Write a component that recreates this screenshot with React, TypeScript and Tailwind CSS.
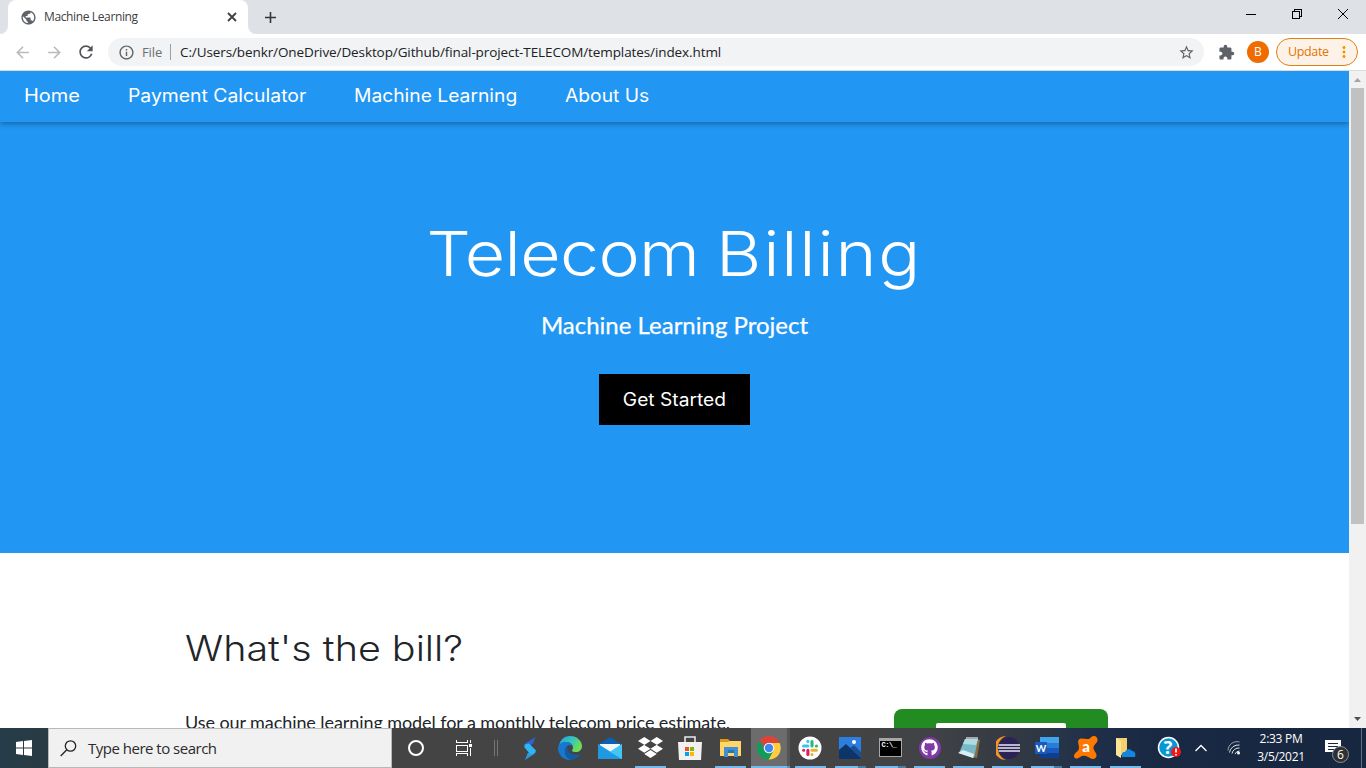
import React from "react";
import {
  MdPublic, MdAdd, MdArrowBack, MdArrowForward, MdRefresh,
  MdInfoOutline, MdStarBorder, MdExtension, MdMoreVert,
} from "react-icons/md";
import { FaGithub, FaDropbox } from "react-icons/fa";

function TabStrip() {
  return (
    <div className="flex h-[34px] shrink-0 bg-[#dee1e6]">
      <div className="w-2 bg-white">
        <div className="h-full rounded-br-lg bg-[#dee1e6]" />
      </div>
      <div className="flex w-[240px] items-center rounded-t-lg bg-white pl-[12px] pr-[9px]">
        <MdPublic size={17} className="shrink-0 text-[#5f6368]" />
        <span className="ml-[7px] grow whitespace-nowrap text-[12px] tracking-[-0.37px] text-[#3c4043]">Machine Learning</span>
        <svg width="14" height="14" viewBox="0 0 14 14" className="shrink-0" stroke="#3c4043" strokeWidth="1.800"><path d="M3 3l8 8M11 3l-8 8" /></svg>
      </div>
      <div className="w-2 bg-white">
        <div className="h-full rounded-bl-lg bg-[#dee1e6]" />
      </div>
      <div className="flex w-7 items-center justify-center">
        <MdAdd size={19} className="text-[#33363a]" />
      </div>
      <div className="grow" />
      <svg width="138" height="28" viewBox="0 0 138 28" fill="none" stroke="#000" shapeRendering="crispEdges">
        <path d="M18 14.500h10" />
        <path d="M64.500 11.500h7v7h-7zM66.500 11v-1.500h7v7H72" />
        <path d="M110 9l10 10M120 9l-10 10" shapeRendering="auto" />
      </svg>
    </div>
  );
}

function Toolbar() {
  return (
    <div className="flex h-[37px] shrink-0 items-center border-b border-[#dadce0] bg-white pl-[13px] pr-2 text-[13px]">
      <MdArrowBack size={19} className="shrink-0 text-[#b8babd]" />
      <MdArrowForward size={19} className="ml-[13px] shrink-0 text-[#b8babd]" />
      <MdRefresh size={20} className="ml-3 shrink-0 text-[#515559]" />
      <div className="ml-3 flex h-7 w-[1096px] shrink-0 items-center rounded-full bg-[#f1f3f4] pl-[10px] pr-[9px]">
        <MdInfoOutline size={17} className="text-[#5f6368]" />
        <span className="ml-[7px] w-[21px] whitespace-nowrap pt-px tracking-[-0.1px] text-[#6b6f74]">File</span>
        <span className="ml-[7px] h-4 w-px bg-[#9aa0a6]" />
        <span className="ml-[9px] grow whitespace-nowrap pt-px text-[13.5px] tracking-[-0.1px] text-[#202124]">
          C:/Users/benkr/OneDrive/Desktop/Github/final-project-TELECOM/templates/index.html
        </span>
        <MdStarBorder size={17} className="text-[#5f6368]" />
      </div>
      <MdExtension size={17} className="ml-[14px] shrink-0 text-[#5f6368]" />
      <div className="ml-3 flex size-[22px] shrink-0 items-center justify-center rounded-full bg-[#ef6c00] text-[12px] text-white">B</div>
      <div className="ml-[7px] flex h-7 w-[82px] shrink-0 items-center rounded-full border border-[#e37f0c] bg-[#fcf2e8] pl-[11px] text-[12.5px] text-[#e37400]">
        <span className="w-[39px] whitespace-nowrap tracking-[-0.35px]">Update</span>
        <MdMoreVert size={18} className="ml-[8px] text-[#f29900]" />
      </div>
    </div>
  );
}

function Page() {
  return (
    <div className="flex min-h-0 grow bg-white">
      <div className="flex w-[1349px] flex-col overflow-hidden">
        <nav className="z-10 flex h-[51px] shrink-0 gap-12 whitespace-nowrap bg-[#2196f3] pl-6 font-['Inter'] text-[18px] leading-[50px] text-white shadow-[0_2px_5px_rgba(0,0,0,0.3)]">
          <a className="w-14 origin-left scale-x-[1.11]">Home</a>
          <a className="w-[178px] origin-left scale-x-[1.076]">Payment Calculator</a>
          <a className="w-[163px] origin-left scale-x-[1.07]">Machine Learning</a>
          <a className="w-[84px] origin-left scale-x-[1.07]">About Us</a>
        </nav>
        <header className="flex h-[431px] shrink-0 flex-col items-center bg-[#2196f3] pt-[85px] text-white">
          <h1 className="scale-x-[1.125] whitespace-nowrap font-['Inter'] text-[62px] font-light leading-[94px]">
            <span className="tracking-[-0.55px]">Telecom </span>
            <span className="-ml-[2px] tracking-[1.6px]">Billing</span>
          </h1>
          <p className="mt-[6px] whitespace-nowrap font-['Lato'] text-[24px] leading-9 [-webkit-text-stroke:0.25px_white]">Machine Learning Project</p>
          <button className="mt-[31px] h-[51px] w-[151px] whitespace-nowrap bg-black pb-px font-['Inter'] text-[18px]">
            <span className="inline-block scale-x-[1.065]">Get Started</span>
          </button>
        </header>
        <main className="flex min-h-0 grow justify-between overflow-hidden pl-[185px] pr-[241px] text-[#212529]">
          <section>
            <h2 className="mt-[68px] w-[248px] origin-left scale-x-[1.128] whitespace-nowrap font-['Inter'] text-[35px] font-light leading-[54px]">What's the bill?</h2>
            <p className="mt-[34px] whitespace-nowrap font-['Lato'] text-[18px] leading-[27px] tracking-[-0.08px]">
              Use our machine learning model for a monthly telecom price estimate.
            </p>
          </section>
          <div className="mt-[156px] h-[260px] w-[214px] rounded-lg bg-[#228b22] px-[42px] pt-[14px]">
            <div className="h-20 rounded-[2px] bg-white" />
          </div>
        </main>
      </div>
      <div className="flex w-[17px] flex-col items-center bg-[#f1f1f1]">
        <svg width="17" height="17" viewBox="0 0 17 17"><path d="M5 11l3.500-4 3.500 4z" fill="#a3a3a3" /></svg>
        <div className="h-[436px] w-[13px] bg-[#c1c1c1]" />
        <div className="grow" />
        <svg width="17" height="17" viewBox="0 0 17 17"><path d="M5 6l3.500 4L12 6z" fill="#505050" /></svg>
      </div>
    </div>
  );
}

const barStyles = {
  none: "hidden",
  single: "w-[31px]",
  split: "w-[31px]",
  active: "w-[39px]",
};

function AppSlot({ bar = "none", narrow = false, children }: { bar?: keyof typeof barStyles; narrow?: boolean; children: React.ReactNode }) {
  const active = bar === "active";
  return (
    <div className={`${narrow ? "w-[39px]" : "w-10"} flex h-10 shrink-0 flex-col items-center`}>
      <div className={`flex h-[38px] items-center justify-center pt-px ${active ? "w-[39px] border-r-[3px] border-[#555] bg-[#6c6c6c]" : "w-full"}`}>{children}</div>
      <div className={`${barStyles[bar]} flex h-[2px] bg-[#76b9ed]`}>
        {bar === "split" && <div className="ml-[23px] w-2 bg-[#4e7ba1]" />}
        {active && <div className="ml-9 w-[3px] bg-[#5b94c1]" />}
      </div>
    </div>
  );
}

const StormIcon = () => (
  <svg width="24" height="24" viewBox="0 0 24 24">
    <path d="M17.500 1l-2.500 6.500-4 2.500-4-2c1-2 3-2.500 5-3.500z" fill="#2f62d8" />
    <path d="M7 24l2.500-6.500 4-3 4 1.500c-1 2-2.500 3-4.500 4z" fill="#2a9be0" />
    <path d="M6.500 8.500l4.500-1 7 7-1 2.500-4.500 1.500-6-7z" fill="#2fb5f3" />
  </svg>
);

const EdgeIcon = () => (
  <svg width="24" height="24" viewBox="0 0 24 24">
    <defs>
      <linearGradient id="edgeTop" x1="0" y1="0" x2="1" y2=".5"><stop stopColor="#249edb" /><stop offset=".55" stopColor="#35c5bf" /><stop offset="1" stopColor="#70dd50" /></linearGradient>
    </defs>
    <path d="M1 10C2 4 6 0 12 0c7 0 12 5 12 10 0 4-3 6-6 6-2 0-4-.7-4-1.600 0-.7 1-1 1-3C15 9 12 6 8 6c-3 0-6 2-7 4z" fill="url(#edgeTop)" />
    <path d="M0 12c0-4 4-6 8-6 4 0 7 2 7 5-1-2-3-2-4-2-3 1-4 4-4 7 0 4 3 7 7 8C6 25 0 19 0 12z" fill="#1778cf" />
    <path d="M9.500 10C7 12 6 14 7 17c1 4 4 7 7 7 4-1 7-3 8.500-5.500.3-.5-.1-.8-.6-.6C15 20.500 9 17 9.500 10z" fill="#115ca5" />
  </svg>
);

const MailIcon = () => (
  <svg width="24" height="24" viewBox="0 0 24 24">
    <path d="M0 9L12 1l12 8v3H0z" fill="#0b61b5" />
    <path d="M2 8h20v8H2z" fill="#f4f5f7" />
    <path d="M0 8l12 8 12-8v15H0z" fill="#35b8f1" />
    <path d="M0 8l24 15H0z" fill="#1e9ae4" /><path d="M24 8v15L12 16z" fill="#42c5f7" />
  </svg>
);

const StoreIcon = () => (
  <svg width="24" height="24" viewBox="0 0 24 24">
    <path d="M7 7V1h10v6" fill="none" stroke="#e8e8e8" strokeWidth="1.600" />
    <path d="M0 6h24l-1 18H1z" fill="#f1f1f1" />
    <path d="M7 11h4v4H7z" fill="#f25022" /><path d="M12 11h4v4h-4z" fill="#7fba00" />
    <path d="M7 16h4v4H7z" fill="#00a4ef" /><path d="M12 16h4v4h-4z" fill="#ffb900" />
  </svg>
);

const ExplorerIcon = () => (
  <svg width="23" height="20" viewBox="0 0 23 20">
    <path d="M1 1h8l2 2h11v6H1z" fill="#d99b16" />
    <path d="M1 4h8l2-1h11v15H1z" fill="#ffd667" />
    <path d="M5 9h14v10h-4v-4H9v4H5z" fill="#3e91d3" /><path d="M9 12h6v3H9z" fill="#2877b5" />
  </svg>
);

const ChromeIcon = () => (
  <svg width="24" height="24" viewBox="0 0 24 24">
    <path d="M12 12L2.200 5.300A11.500 11.500 0 0 1 22.600 7H12z" fill="#db4437" />
    <path d="M22.600 7A11.500 11.500 0 0 1 11.500 23.500L16.500 14.500 12 7z" fill="#ffcd40" />
    <path d="M2.200 5.300A11.500 11.500 0 0 0 11.500 23.500L16.300 14.500 12 12 7 13z" fill="#0f9d58" />
    <circle cx="12" cy="12" r="5.300" fill="#f4f4f4" /><circle cx="12" cy="12" r="4.200" fill="#4285f4" />
  </svg>
);

const SlackIcon = () => (
  <svg width="24" height="24" viewBox="0 0 24 24" strokeWidth="3.100" strokeLinecap="round">
    <circle cx="12" cy="12" r="11.500" fill="#fff" />
    <path d="M9.900 5.400v.2M5.600 10h4.300" stroke="#36c5f0" />
    <path d="M14 5.500V10M18.400 10h.1" stroke="#2eb67d" />
    <path d="M18.400 14.200H14M14 18.500v.1" stroke="#ecb22e" />
    <path d="M9.900 14.200v4.200M5.600 14.200h.1" stroke="#e01e5a" />
  </svg>
);

const PhotosIcon = () => (
  <svg width="22" height="22" viewBox="0 0 22 22">
    <path d="M0 0h22v22H0z" fill="#2c7fe0" />
    <path d="M0 13l7-6 15 14v1H0z" fill="#0e3569" /><path d="M11 11l4-3 7 7v6z" fill="#1b4f94" />
    <circle cx="15" cy="5" r="2" fill="#fff" />
  </svg>
);

const TerminalIcon = () => (
  <div className="h-[19px] w-[23px] border border-[#a7a7a7] border-t-[3px] bg-black pl-[2px] pt-px font-['Liberation_Mono'] text-[7px] font-bold leading-[7px] tracking-[-0.5px] text-white">C:\_</div>
);

const NotepadIcon = () => (
  <svg width="24" height="24" viewBox="0 0 24 24">
    <path d="M20 3l3 1-3 18-4-1z" fill="#8b6b43" />
    <path d="M8 3l13 0-4 19-15-5z" fill="#78b9c8" /><path d="M8 3h13l-2 6-13-1z" fill="#b0dbe2" />
    <path d="M1 17l5-3 11 4-1 4z" fill="#d9eef0" /><path d="M9 2h12" stroke="#ccc" strokeWidth="1.500" />
  </svg>
);

const EclipseIcon = () => (
  <svg width="24" height="24" viewBox="0 0 24 24">
    <path d="M10 0A12 12 0 0 0 10 24C-1 19-1 5 10 0z" fill="#f79422" />
    <circle cx="13" cy="12" r="11" fill="#2c2255" />
    <path d="M2.500 9h21.500M2 12h22M2.500 15h21.500" stroke="#e8e6f2" strokeWidth="1.500" />
  </svg>
);

const WordIcon = () => (
  <svg width="24" height="22" viewBox="0 0 24 22">
    <path d="M5 0h19v6H5z" fill="#41a5ee" /><path d="M5 6h19v5H5z" fill="#2b7cd3" />
    <path d="M5 11h19v5H5z" fill="#185abd" /><path d="M5 16h19v5H5z" fill="#103f91" />
    <path d="M0 5h12v12H0z" fill="#185abd" />
    <text x="6" y="14.500" textAnchor="middle" fill="#fff" className="font-['Lato'] text-[10px] font-bold">W</text>
  </svg>
);

const AvastIcon = () => (
  <svg width="24" height="24" viewBox="0 0 24 24">
    <path d="M5 3.500C7 1.500 11 3.500 14.500 3c2.500-.5 2.500-3 5.500-3 3 0 4.500 3.500 3 6-1.200 2-4 3.500-3.500 6.500.5 3 3.500 4.500 3 7.500-.5 3-4 3.800-6.500 2-2.500-1.800-5-3-8-2-2.500 1-3.500 3-6 2.500C0 22-.7 19.500 1 17.500c1.500-1.700 4-2.500 4-6 0-3-2-6 0-8z" fill="#ff7800" />
    <text x="12" y="15.500" textAnchor="middle" fill="#fff" className="font-['Lato'] text-[15px] font-black">a</text>
  </svg>
);

const OneDriveFolderIcon = () => (
  <svg width="22" height="22" viewBox="0 0 22 22">
    <path d="M2 1h11v17H2z" fill="#f5ce70" /><path d="M2 1l5 3v17l-5-3z" fill="#ffe498" />
    <path d="M8 20c-1-3 0-5 3-5 1-3 5-4 7-1 3 0 4 3 3 6z" fill="#1685de" />
  </svg>
);

const HelpIcon = () => (
  <svg width="24" height="24" viewBox="0 0 24 24">
    <circle cx="11.500" cy="11.500" r="10" fill="#0797d7" stroke="#fff" strokeWidth="1.500" />
    <text x="11" y="18" textAnchor="middle" fill="#fff" className="font-['Open_Sans'] text-[18px] font-bold">?</text>
    <circle cx="19" cy="16" r="5" fill="#f11616" />
    <path d="M19 12.500v4M19 18v1.500" stroke="#fff" strokeWidth="1.700" />
  </svg>
);

function Taskbar() {
  return (
    <div className="flex h-10 shrink-0 bg-[linear-gradient(90deg,#444_0,#444_850px,#404246_930px,#343a43_1010px,#20304a_1090px,#1a2943_1150px,#182740_100%)] text-white">
      <div className="flex w-12 items-center justify-center bg-[linear-gradient(90deg,#253d49,#293a43)]">
        <svg width="16" height="16" viewBox="0 0 16 16" fill="#fff"><path d="M0 2l7-1v6.500H0zM8 .9L16 0v7.500H8zM0 8.500h7V15l-7-1zM8 8.500h8V16l-8-1z" /></svg>
      </div>
      <div className="flex w-[344px] items-center border border-[#b9b9b9] bg-[#f1f1f1] pl-[11px]">
        <svg width="17" height="17" viewBox="0 0 17 17" fill="none" stroke="#222" strokeWidth="1.300"><circle cx="10.500" cy="6" r="5.200" /><path d="M6.800 9.800L.7 16" /></svg>
        <span className="ml-[11px] whitespace-nowrap text-[15px] tracking-[-0.5px] text-[#2b2b2b]">Type here to search</span>
      </div>
      <div className="flex w-12 items-center justify-center">
        <svg width="18" height="18" viewBox="0 0 18 18"><circle cx="9" cy="9" r="7" fill="none" stroke="#fff" strokeWidth="2" /></svg>
      </div>
      <div className="flex w-12 items-center justify-center">
        <svg width="17" height="16" viewBox="0 0 17 16" fill="none" stroke="#fff" shapeRendering="crispEdges">
          <path d="M.5 0v2.500h11V0M.5 5.500h11v6H.5zM.5 16v-2.500h11V16M14.500 0v3M14.500 8v8" /><path d="M13 4h3v3h-3z" fill="#fff" stroke="none" />
        </svg>
      </div>
      <div className="flex w-[22px] items-center gap-[2px] pl-[6px]">
        <span className="h-4 w-px bg-[#777]" /><span className="h-4 w-px bg-[#777]" />
      </div>
      <AppSlot><StormIcon /></AppSlot>
      <AppSlot><EdgeIcon /></AppSlot>
      <AppSlot><MailIcon /></AppSlot>
      <AppSlot bar="single"><FaDropbox size={25} /></AppSlot>
      <AppSlot><StoreIcon /></AppSlot>
      <AppSlot bar="single"><ExplorerIcon /></AppSlot>
      <AppSlot bar="active"><ChromeIcon /></AppSlot>
      <AppSlot bar="single"><SlackIcon /></AppSlot>
      <AppSlot bar="split"><PhotosIcon /></AppSlot>
      <AppSlot bar="split"><TerminalIcon /></AppSlot>
      <AppSlot bar="single" narrow>
        <div className="flex size-[22px] items-center justify-center rounded-full bg-[#8139a6]"><FaGithub size={17} /></div>
      </AppSlot>
      <AppSlot bar="single" narrow><NotepadIcon /></AppSlot>
      <AppSlot bar="single" narrow><EclipseIcon /></AppSlot>
      <AppSlot bar="split" narrow><WordIcon /></AppSlot>
      <AppSlot bar="single" narrow><AvastIcon /></AppSlot>
      <AppSlot bar="single"><OneDriveFolderIcon /></AppSlot>
      <div className="flex w-12 items-center justify-center"><HelpIcon /></div>
      <div className="flex w-4 items-center justify-center">
        <svg width="12" height="8" viewBox="0 0 12 8" fill="none" stroke="#fff" strokeWidth="1.300"><path d="M.5 7L6 1.500 11.500 7" /></svg>
      </div>
      <div className="flex w-[49px] items-center justify-center">
        <svg width="14" height="14" viewBox="0 0 14 14" fill="none" stroke="#e0e3e8">
          <path d="M1 9.500A9 9 0 0 1 12.500 1" opacity=".65" /><path d="M2.500 11.500A9 9 0 0 1 12.500 4" /><path d="M5 12.500A7 7 0 0 1 12.500 7M8 13a5 5 0 0 1 4.500-3" /><circle cx="11.500" cy="12" r="1.500" fill="#fff" stroke="none" />
        </svg>
      </div>
      <div className="flex w-[46px] flex-col items-center whitespace-nowrap pt-[2px] text-[12px] leading-[18px] tracking-[-0.3px]">
        <span>2:33 PM</span>
        <span>3/5/2021</span>
      </div>
      <div className="flex w-[57px] items-center pl-[21px]">
        <div className="relative">
          <svg width="18" height="18" viewBox="0 0 18 18"><path d="M0 1h16v12h-3v4l-4-4H0z" fill="#fff" /><path d="M3 4.500h10M3 7.500h10M3 10.500h7" stroke="#182740" /></svg>
          <span className="absolute left-[7px] top-[7px] flex size-[17px] items-center justify-center rounded-full border border-[#8c9096] bg-[#303033] text-[12px]">6</span>
        </div>
      </div>
      <div className="w-px bg-[#66717f]" />
    </div>
  );
}

export default function App() {
  return (
    <div className="flex h-[768px] w-[1366px] flex-col overflow-hidden font-['Open_Sans',sans-serif]">
      <TabStrip />
      <Toolbar />
      <Page />
      <Taskbar />
    </div>
  );
}
